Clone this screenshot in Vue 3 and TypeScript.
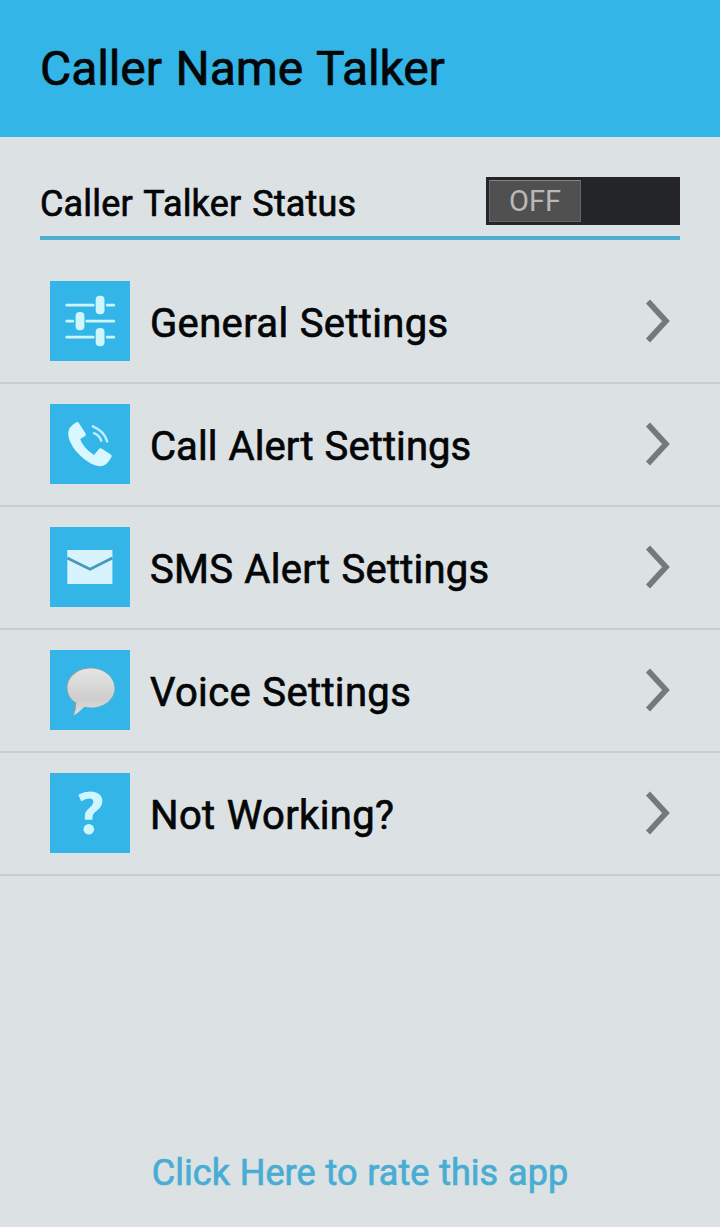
<script setup lang="ts">
import { ref } from 'vue'

type IconName = 'sliders' | 'phone' | 'mail' | 'bubble' | 'help'

interface MenuItem {
  label: string
  icon: IconName
}

const items: MenuItem[] = [
  { label: 'General Settings', icon: 'sliders' },
  { label: 'Call Alert Settings', icon: 'phone' },
  { label: 'SMS Alert Settings', icon: 'mail' },
  { label: 'Voice Settings', icon: 'bubble' },
  { label: 'Not Working?', icon: 'help' },
]

const enabled = ref(false)
</script>

<template>
  <main class="screen">
    <header class="header">
      <h1 class="title">Caller Name Talker</h1>
    </header>

    <section class="status">
      <span class="status-label">Caller Talker Status</span>
      <button class="switch" :class="{ on: enabled }" type="button" @click="enabled = !enabled">
        <span class="thumb">{{ enabled ? 'ON' : 'OFF' }}</span>
      </button>
    </section>

    <ul class="menu">
      <li v-for="item in items" :key="item.icon" class="row">
        <span class="tile">
          <svg v-if="item.icon === 'sliders'" width="80" height="80" viewBox="0 0 80 80">
            <g fill="#cdf6ff">
              <rect x="15.5" y="22.7" width="29" height="2.8" rx="1" />
              <rect x="56" y="22.7" width="9" height="2.8" rx="1" />
              <rect x="15.5" y="38.7" width="8.5" height="2.8" rx="1" />
              <rect x="35.5" y="38.7" width="29.5" height="2.8" rx="1" />
              <rect x="15.5" y="54.7" width="29" height="2.8" rx="1" />
              <rect x="56" y="54.7" width="9" height="2.8" rx="1" />
              <rect x="45.7" y="14.8" width="8.8" height="18.4" rx="4" />
              <rect x="25.6" y="30.9" width="8.8" height="18.4" rx="4" />
              <rect x="45.7" y="46.9" width="8.8" height="18.4" rx="4" />
            </g>
          </svg>
          <svg v-else-if="item.icon === 'phone'" width="80" height="80" viewBox="0 0 80 80">
            <path
              d="M26 18.5Q27.7 17.4 29 19.2L35.6 29.6Q36.4 31 35.1 31.9L30.2 35.1Q32.8 43.7 44 51.1L49 45Q50 43.6 51.5 44.5L60.8 50.6Q62.4 51.7 61.4 53.3Q56.5 62.2 51 62.2C39 62.5 18.2 44 18.2 29.2Q18.2 23.2 26 18.5Z"
              fill="#d8f7ff"
            />
            <g fill="none" stroke="#bdeeff" stroke-width="2.4" stroke-linecap="round">
              <path d="M42.8 22.3Q54.3 27 57.2 37.4" />
              <path d="M44 29.2Q49.8 31.7 51.2 36.8" />
            </g>
          </svg>
          <svg v-else-if="item.icon === 'mail'" width="80" height="80" viewBox="0 0 80 80">
            <rect x="17.3" y="23" width="45.1" height="34" fill="#d7f3fd" />
            <path d="M17.3 31L40 42.2L62.4 31" fill="none" stroke="#4799b7" stroke-width="2.7" />
          </svg>
          <svg v-else-if="item.icon === 'bubble'" width="80" height="80" viewBox="0 0 80 80">
            <defs>
              <linearGradient id="bubble-fill" x1="0" y1="0" x2="0" y2="1">
                <stop offset="0" stop-color="#e4e4e4" />
                <stop offset=".65" stop-color="#cecece" />
                <stop offset="1" stop-color="#dedede" />
              </linearGradient>
            </defs>
            <path
              d="M40 17.5C26.5 17.5 16.5 26.2 16.5 37.6C16.5 44 19.5 49.4 24.8 52.9L22.5 65.3L33.8 56.7C50 60 64.5 51.5 64.5 38.2C64.5 26.3 53.5 17.5 40 17.5Z"
              fill="#7fa3b1"
            />
            <path
              d="M41 18.5C27.5 18.5 17.5 27 17.5 38C17.5 44.5 20.6 49.3 26.2 52.7Q26.6 59.6 23.8 65.5Q29.5 62 34.5 56.8C50.5 60 64.5 51.5 64.5 38.2C64.5 27 54 18.5 41 18.5Z"
              fill="url(#bubble-fill)"
            />
          </svg>
          <svg v-else width="80" height="80" viewBox="0 0 80 80">
            <path
              d="M31.2 28.3Q35.7 25.4 39.2 25.4Q43.3 25.4 43.3 28.8C43.3 34.6 34.8 35.2 34.8 43.3V46.8H42.5V44C42.5 38.2 52.4 37.2 52.4 28.1C52.4 21.8 47.2 18.4 40.3 18.4Q33.9 18.4 28.3 21.7Z"
              fill="#cdf6ff"
            />
            <circle cx="38.8" cy="56.2" r="5.3" fill="#cdf6ff" />
          </svg>
        </span>
        <span class="label" :class="item.icon">{{ item.label }}</span>
        <svg class="chevron" width="26" height="44" viewBox="0 0 26 44">
          <path d="M4 2.5L22 22L4 41.5" fill="none" stroke="#76797b" stroke-width="5.6" />
        </svg>
      </li>
    </ul>

    <footer class="footer">
      <a class="rate">Click Here to rate this app</a>
    </footer>
  </main>
</template>

<style>
body {
  margin: 0;
  background: #dce1e4;
}
</style>

<style scoped>
.screen {
  display: flex;
  flex-direction: column;
  box-sizing: border-box;
  width: 720px;
  height: 1227px;
  overflow: hidden;
  background: #dce1e4;
  color: #050607;
  font-family: Roboto, "Liberation Sans", sans-serif;
  font-weight: 400;
  white-space: nowrap;
}

.title,
.status-label,
.label,
.rate {
  -webkit-text-stroke: 0.7px currentColor;
}

.header {
  display: flex;
  align-items: center;
  box-sizing: border-box;
  height: 137px;
  padding: 0 40px;
  background: #33b5e7;
}

.title {
  margin: 0;
  font-size: 48px;
  line-height: 56px;
  font-weight: 400;
  letter-spacing: -0.1px;
  word-spacing: 2px;
}

.status {
  display: flex;
  align-items: flex-start;
  justify-content: space-between;
  box-sizing: border-box;
  height: 103px;
  margin: 0 40px 21px;
  padding-top: 40px;
  border-bottom: 4px solid #4eadd0;
}

.status-label {
  padding-top: 6px;
  font-size: 36px;
  line-height: 42px;
  letter-spacing: 0.17px;
  word-spacing: 2px;
}

.switch {
  display: flex;
  box-sizing: border-box;
  width: 194px;
  height: 48px;
  padding: 3px;
  border: 0;
  background: #242527;
  font: inherit;
}

.switch.on {
  justify-content: flex-end;
}

.thumb {
  box-sizing: border-box;
  width: 92px;
  height: 42px;
  border: 1px solid #666768;
  border-top-color: #848586;
  background: #505051;
  color: #b9b9b9;
  font-size: 29px;
  font-weight: 400;
  line-height: 40px;
  text-align: center;
}

.menu {
  margin: 0;
  padding: 0;
  list-style: none;
}

.row {
  display: flex;
  align-items: center;
  box-sizing: border-box;
  height: 123px;
  padding: 0 50px 1px 50px;
  border-bottom: 2px solid #cacdd0;
}

.tile {
  width: 80px;
  height: 80px;
  background: #33b5e7;
}

.tile svg,
.chevron {
  display: block;
}

.label {
  flex: 1;
  padding: 5px 0 0 20px;
  font-size: 40px;
  line-height: 48px;
  letter-spacing: 0.35px;
  word-spacing: 1px;
}

.label.phone {
  letter-spacing: 0.08px;
}

.label.mail {
  letter-spacing: 0.25px;
}

.footer {
  display: flex;
  justify-content: center;
  margin-top: auto;
  padding-bottom: 33px;
}

.rate {
  color: #48add3;
  font-size: 36px;
  line-height: 42px;
  letter-spacing: 0;
  word-spacing: 1px;
}
</style>
